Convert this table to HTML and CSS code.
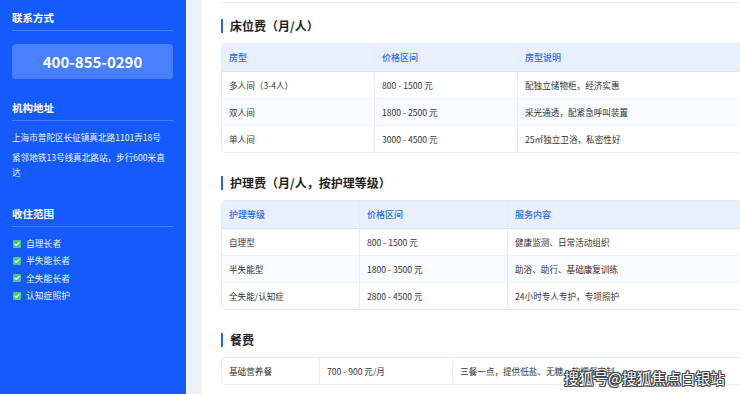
FILE: index.html
```html
<!DOCTYPE html>
<html lang="zh-CN">
<head>
<meta charset="utf-8">
<title>收费标准</title>
<link rel="stylesheet" href="styles.css">
</head>
<body>
<div class="page">
  <aside class="sidebar">
    <h3 class="side-title">联系方式</h3>
    <div class="phone">400-855-0290</div>

    <h3 class="side-title gap">机构地址</h3>
    <p class="addr first">上海市普陀区长征镇真北路1101弄18号</p>
    <p class="addr">紧邻地铁13号线真北路站，步行600米直达</p>

    <h3 class="side-title gap2">收住范围</h3>
    <ul class="checks">
      <li><span class="box"><svg viewBox="0 0 8 8" width="8" height="8"><path d="M1.8 4.1 L3.3 5.5 L6.2 2.5" fill="none" stroke="#fff" stroke-width="1.1" stroke-linecap="round" stroke-linejoin="round"/></svg></span>自理长者</li>
      <li><span class="box"><svg viewBox="0 0 8 8" width="8" height="8"><path d="M1.8 4.1 L3.3 5.5 L6.2 2.5" fill="none" stroke="#fff" stroke-width="1.1" stroke-linecap="round" stroke-linejoin="round"/></svg></span>半失能长者</li>
      <li><span class="box"><svg viewBox="0 0 8 8" width="8" height="8"><path d="M1.8 4.1 L3.3 5.5 L6.2 2.5" fill="none" stroke="#fff" stroke-width="1.1" stroke-linecap="round" stroke-linejoin="round"/></svg></span>全失能长者</li>
      <li><span class="box"><svg viewBox="0 0 8 8" width="8" height="8"><path d="M1.8 4.1 L3.3 5.5 L6.2 2.5" fill="none" stroke="#fff" stroke-width="1.1" stroke-linecap="round" stroke-linejoin="round"/></svg></span>认知症照护</li>
    </ul>
  </aside>

  <main class="main">
    <div class="card">
      <div class="prev-end"></div>

      <section class="sec">
        <h2 class="sec-title">床位费（月/人）</h2>
        <table class="fee t1">
          <colgroup><col class="c1"><col class="c2"><col></colgroup>
          <thead>
            <tr><th>房型</th><th>价格区间</th><th>房型说明</th></tr>
          </thead>
          <tbody>
            <tr><td>多人间（3-4人）</td><td>800 - 1500 元</td><td>配独立储物柜，经济实惠</td></tr>
            <tr class="alt"><td>双人间</td><td>1800 - 2500 元</td><td>采光通透，配紧急呼叫装置</td></tr>
            <tr><td>单人间</td><td>3000 - 4500 元</td><td>25㎡独立卫浴，私密性好</td></tr>
          </tbody>
        </table>
      </section>

      <section class="sec">
        <h2 class="sec-title">护理费（月/人，按护理等级）</h2>
        <table class="fee t2">
          <colgroup><col class="c1"><col class="c2"><col></colgroup>
          <thead>
            <tr><th>护理等级</th><th>价格区间</th><th>服务内容</th></tr>
          </thead>
          <tbody>
            <tr><td>自理型</td><td>800 - 1500 元</td><td>健康监测、日常活动组织</td></tr>
            <tr class="alt"><td>半失能型</td><td>1800 - 3500 元</td><td>助浴、助行、基础康复训练</td></tr>
            <tr><td>全失能/认知症</td><td>2800 - 4500 元</td><td>24小时专人专护，专项照护</td></tr>
          </tbody>
        </table>
      </section>

      <section class="sec">
        <h2 class="sec-title">餐费</h2>
        <table class="fee t3">
          <colgroup><col class="c1"><col class="c2"><col></colgroup>
          <tbody>
            <tr class="first"><td>基础营养餐</td><td>700 - 900 元/月</td><td>三餐一点，提供低盐、无糖、软糯餐定制</td></tr>
          </tbody>
        </table>
      </section>
    </div>
    <div class="edge-fade"></div>
    <div class="watermark">搜狐号@搜狐焦点白银站</div>
  </main>
</div>
</body>
</html>
```

FILE: styles.css
```css
* { box-sizing: border-box; }

html, body {
  margin: 0;
  padding: 0;
  width: 740px;
  height: 394px;
  overflow: hidden;
  background: #eef1f6;
  font-family: "Noto Sans CJK SC", "Noto Sans", sans-serif;
}

.page {
  display: flex;
  height: 394px;
}

/* ---------- sidebar ---------- */
.sidebar {
  flex: 0 0 188px;
  width: 188px;
  background: #155bfc;
  border-right: 2px solid #f2f5fb;
  padding: 11px 13px 0 12px;
  color: #fff;
}

.side-title {
  margin: 0;
  font-size: 10.5px;
  font-weight: 700;
  line-height: 14px;
  padding-bottom: 5px;
  border-bottom: 1px solid rgba(255, 255, 255, 0.22);
}

.side-title.gap { margin-top: 22px; }
.side-title.gap2 { margin-top: 27px; }

.phone {
  margin-top: 13px;
  height: 35px;
  border-radius: 4px;
  background: rgba(255, 255, 255, 0.22);
  display: flex;
  align-items: center;
  justify-content: center;
  font-size: 15px;
  font-weight: 700;
}

.addr {
  margin: 5px 0 0;
  font-size: 8.6px;
  line-height: 15px;
  color: #eef3ff;
}

.addr.first { margin-top: 9px; }

.checks {
  list-style: none;
  margin: 8px 0 0;
  padding: 0;
}

.checks li {
  display: flex;
  align-items: center;
  height: 17.3px;
  font-size: 8.8px;
  color: #eef3ff;
  padding-left: 1px;
}

.box {
  width: 8px;
  height: 8px;
  border-radius: 1px;
  background: #4cc77e;
  display: inline-flex;
  margin-right: 5px;
}

.box svg { display: block; }

/* ---------- main ---------- */
.main {
  flex: 1 0 auto;
  position: relative;
  padding-left: 14px;
}

.card {
  width: 560px;
  height: 394px;
  background: #fff;
  padding-left: 19px;
}

.prev-end {
  height: 3px;
  border-bottom: 1px solid #e4ebf7;
}

.sec { margin-top: 23px; }
.sec:first-of-type { margin-top: 16px; }

.sec-title {
  margin: 0 0 10px;
  height: 14px;
  border-left: 2.5px solid #1d63fb;
  padding-left: 7px;
  font-size: 12px;
  font-weight: 700;
  line-height: 14px;
  color: #1f1f1f;
}

.fee {
  width: 100%;
  table-layout: fixed;
  border-collapse: separate;
  border-spacing: 0;
  border: 1px solid #e4ebf8;
  border-radius: 5px;
  overflow: hidden;
  font-size: 8.6px;
  color: #333;
}

.fee th,
.fee td {
  padding: 0 7px;
  text-align: left;
  white-space: nowrap;
  overflow: hidden;
}

.fee th + th,
.fee td + td {
  border-left: 1px solid #e6edf9;
}

.fee th {
  background: #e8f0fe;
  color: #2a68f2;
  font-weight: 500;
  font-size: 9px;
  line-height: 27px;
  border-bottom: 1px solid #d8e4fb;
}

.fee td {
  line-height: 26px;
  border-top: 1px solid #edf2fb;
}

.fee tbody tr:first-child td { border-top: 0; line-height: 26px; }
.fee tr.alt td { background: #f7faff; }

.t1 .c1 { width: 152px; }
.t1 .c2 { width: 143px; }
.t2 .c1 { width: 137px; }
.t2 .c2 { width: 148px; }
.t3 .c1 { width: 97px; }
.t3 .c2 { width: 133px; }

.edge-fade {
  position: absolute;
  top: 160px;
  right: 0;
  width: 20px;
  height: 234px;
  background: linear-gradient(to right, rgba(235, 238, 243, 0), rgba(226, 230, 237, 0.95));
  pointer-events: none;
}

.watermark {
  position: absolute;
  left: 376px;
  top: 369px;
  font-size: 14.7px;
  line-height: 18px;
  color: #fff;
  white-space: nowrap;
  text-shadow:
    1px 0 0 #444, -1px 0 0 #444, 0 1px 0 #444, 0 -1px 0 #444,
    1px 1px 0 #444, -1px -1px 0 #444, 1px -1px 0 #444, -1px 1px 0 #444;
}
```
